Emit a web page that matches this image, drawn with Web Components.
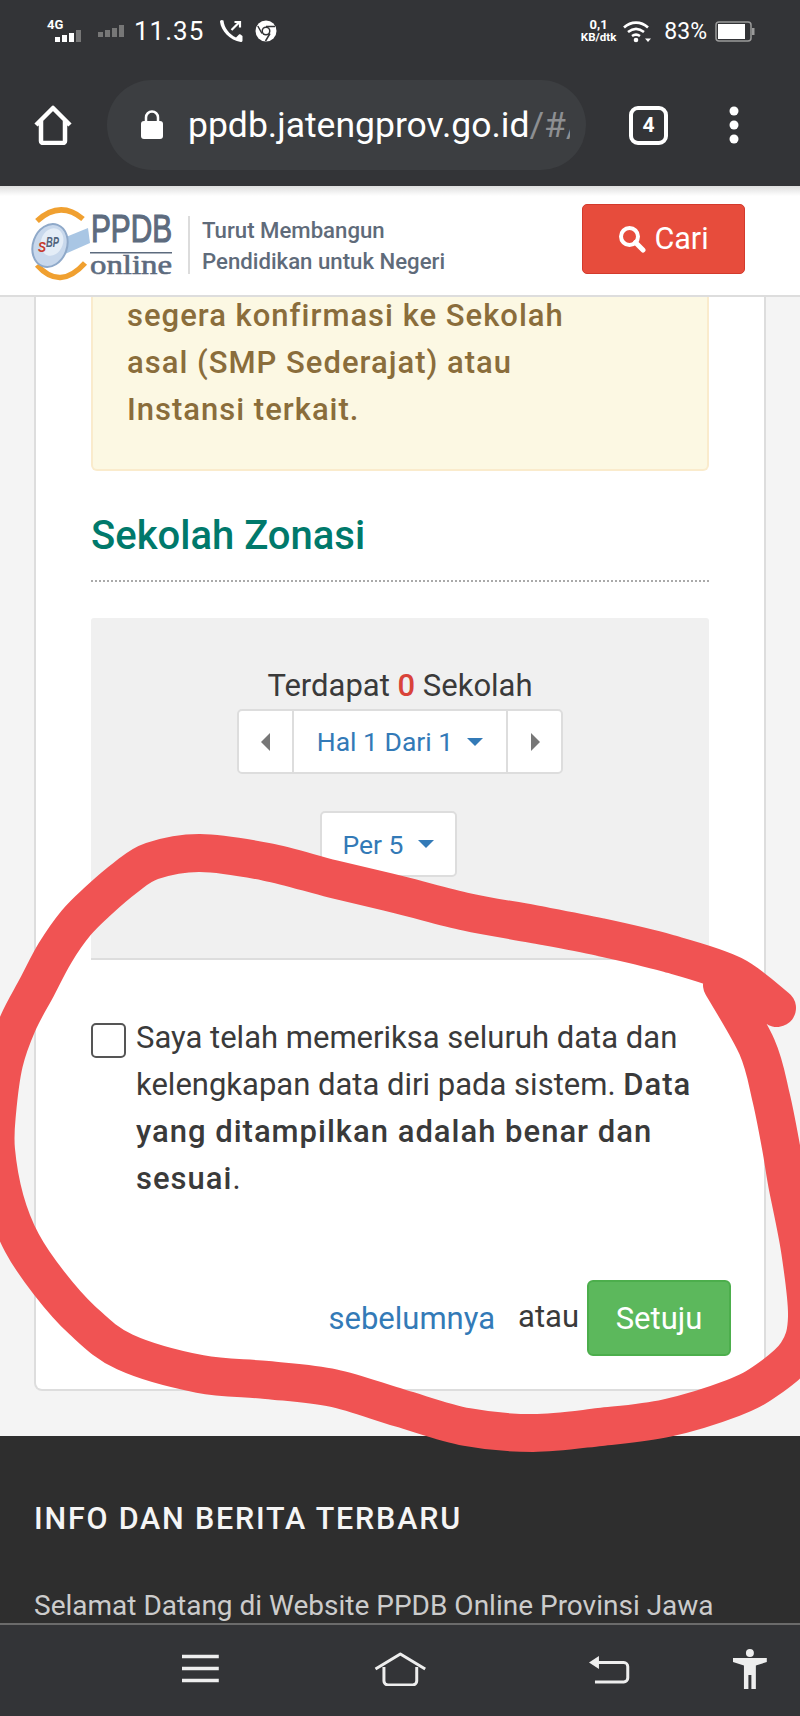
<!DOCTYPE html>
<html lang="id">
<head>
<meta charset="utf-8">
<title>PPDB Online</title>
<style>
  html, body { margin: 0; height: 1716px; overflow: hidden; }
  body {
    position: relative;
    display: flex;
    flex-direction: column;
    font-family: Roboto, "Liberation Sans", sans-serif;
    background: #f4f4f4;
  }
</style>
</head>
<body>
<phone-status></phone-status>
<browser-bar url="ppdb.jatengprov.go.id" rest="/#/" tabs="4"></browser-bar>
<site-header></site-header>
<page-main>
  <form-card>
    <alert-box>segera konfirmasi ke Sekolah<br>asal (SMP Sederajat) atau<br>Instansi terkait.</alert-box>
    <school-panel title-text="Sekolah Zonasi" total="0"></school-panel>
    <agree-form></agree-form>
  </form-card>
  <site-footer></site-footer>
</page-main>
<nav-keys></nav-keys>
<red-scribble></red-scribble>

<script>
class PhoneStatus extends HTMLElement {
  constructor() {
    super();
    this.attachShadow({ mode: "open" });
    this.shadowRoot.innerHTML = /*html*/ `
      <style>
        :host {
          display: flex;
          align-items: center;
          flex: none;
          height: 62px;
          padding: 0 45px 0 47px;
          background: #333437;
          color: #fff;
          font-family: Roboto, sans-serif;
        }
        .net { position: relative; width: 35px; height: 24px; }
        .net b { position: absolute; left: 0; top: -2px; font-size: 13px; font-weight: 700; line-height: 16px; }
        .net svg { position: absolute; left: 8px; top: 11px; }
        .sim2 { margin-left: 16px; }
        .time { margin-left: 8px; font-size: 26px; letter-spacing: 1px; }
        .call { margin-left: 15px; }
        .chrome { margin-left: 12px; }
        .space { flex: 1; }
        .speed { display: flex; flex-direction: column; align-items: center; font-size: 11.500px; font-weight: 700; line-height: 12px; }
        .speed span:first-child { font-size: 13px; }
        .wifi { margin-left: 7px; }
        .pct { margin-left: 13px; font-size: 23px; }
        .bat { margin-left: 8px; }
      </style>
      <div class="net"><b>4G</b>
        <svg width="28" height="12" viewBox="0 0 28 12"><g fill="#fff"><rect x="0" y="7" width="5" height="5"/><rect x="7" y="5" width="5" height="7"/><rect x="14" y="3" width="5" height="9"/></g><rect x="21" y="0" width="5" height="12" fill="#777"/></svg>
      </div>
      <svg class="sim2" width="28" height="14" viewBox="0 0 28 14"><g fill="#777"><rect x="0" y="8" width="5" height="5"/><rect x="7" y="6" width="5" height="7"/><rect x="14" y="4" width="5" height="9"/><rect x="21" y="1" width="5" height="12"/></g></svg>
      <span class="time">11.35</span>
      <svg class="call" width="24" height="24" viewBox="0 0 24 24"><path fill="#fff" d="M4.500 1.500c.5 7 6 14 12.500 17l3-3c.5-.4 1-.4 1.500-.1l2 1.500v4.500c0 1-.8 1.600-1.700 1.500C11 21.500 2 12 1 2.800 1 1.800 1.700 1 2.700 1z"/><path stroke="#fff" stroke-width="2.200" fill="none" d="M12.500 11 20 3.500M15.500 3H21v5.500"/></svg>
      <svg class="chrome" width="22" height="22" viewBox="0 0 22 22"><circle cx="11" cy="11" r="10.500" fill="#fff"/><circle cx="11" cy="11" r="4.500" fill="#333437"/><circle cx="11" cy="11" r="3" fill="#fff"/><path d="M11 6.500h9M7 13.500 2.800 6M15 13.500 10.500 21" stroke="#333437" stroke-width="1.500"/></svg>
      <div class="space"></div>
      <div class="speed"><span>0,1</span><span>KB/dtk</span></div>
      <svg class="wifi" width="28" height="23" viewBox="0 0 28 23"><g fill="none" stroke="#fff" stroke-width="2.600"><path d="M1 7.500C8 1 18 1 25 7.500"/><path d="M5 12c5-4 11-4 16 0"/><path d="M9 16c3-2 5-2 8 0"/></g><circle cx="13" cy="20" r="2.300" fill="#fff"/><path d="M22 18.500h6l-3 3.500z" fill="#fff"/></svg>
      <span class="pct">83%</span>
      <svg class="bat" width="40" height="21" viewBox="0 0 40 21"><rect x="1" y="1" width="35" height="19" rx="3" fill="none" stroke="#9a9a9a" stroke-width="1.500"/><rect x="3" y="3" width="27" height="15" fill="#fff"/><rect x="37" y="7" width="2.500" height="7" fill="#9a9a9a"/></svg>
    `;
  }
}

class BrowserBar extends HTMLElement {
  constructor() {
    super();
    this.attachShadow({ mode: "open" });
    this.shadowRoot.innerHTML = /*html*/ `
      <style>
        :host {
          display: flex;
          align-items: center;
          flex: none;
          height: 124px;
          box-sizing: border-box;
          padding: 2px 0 0 33px;
          background: #333437;
          font-family: Roboto, sans-serif;
        }
        svg { flex: none; }
        .pill {
          display: flex;
          align-items: center;
          flex: none;
          width: 479px;
          height: 90px;
          box-sizing: border-box;
          margin-left: 34px;
          padding: 0 16px 0 33px;
          border-radius: 45px;
          background: #3c3e41;
        }
        .url {
          min-width: 0;
          margin-left: 24px;
          overflow: hidden;
          white-space: nowrap;
          font-size: 35.500px;
          color: #fff;
        }
        .url span { color: #8d8f92; }
        .tabs {
          display: flex;
          align-items: center;
          justify-content: center;
          flex: none;
          width: 39px;
          height: 39px;
          box-sizing: border-box;
          margin-left: 43px;
          border: 4px solid #fff;
          border-radius: 9px;
          color: #fff;
          font-size: 21px;
          font-weight: 700;
        }
        .more { margin-left: 60px; }
      </style>
      <svg width="40" height="40" viewBox="0 0 40 40"><path d="M3 20 20 3l17 17M8 16v20a2 2 0 0 0 2 2h20a2 2 0 0 0 2-2V16" fill="none" stroke="#fff" stroke-width="4.500" stroke-linejoin="round"/></svg>
      <div class="pill">
        <svg width="24" height="30" viewBox="0 0 24 30"><rect x="1" y="11" width="22" height="18" rx="3" fill="#fff"/><path d="M6 12V7.500a6 6 0 0 1 12 0V12" fill="none" stroke="#fff" stroke-width="2.500"/></svg>
        <div class="url"></div>
      </div>
      <div class="tabs"></div>
      <svg class="more" width="12" height="40" viewBox="0 0 12 40"><circle cx="6" cy="6" r="4.500" fill="#fff"/><circle cx="6" cy="20" r="4.500" fill="#fff"/><circle cx="6" cy="34" r="4.500" fill="#fff"/></svg>
    `;
  }

  connectedCallback() {
    const url = this.shadowRoot.querySelector(".url");
    url.textContent = this.getAttribute("url");
    const rest = document.createElement("span");
    rest.textContent = this.getAttribute("rest");
    url.appendChild(rest);
    this.shadowRoot.querySelector(".tabs").textContent = this.getAttribute("tabs");
  }
}

class SiteHeader extends HTMLElement {
  constructor() {
    super();
    this.attachShadow({ mode: "open" });
    this.shadowRoot.innerHTML = /*html*/ `
      <style>
        :host {
          display: flex;
          align-items: center;
          flex: none;
          height: 111px;
          box-sizing: border-box;
          padding: 8px 55px 0 33px;
          background: linear-gradient(#dedede, #fff 10px);
          border-bottom: 2px solid #ddd;
          font-family: Roboto, sans-serif;
        }
        .logo { overflow: visible; flex: none; }
        .divider { width: 2px; height: 58px; margin: 0 12px 0 3px; background: #dcdcdc; }
        .tag {
          flex: 1;
          padding-top: 2px;
          font-size: 22.200px;
          font-weight: 500;
          line-height: 31px;
          color: #5f6b7a;
        }
        .cari {
          display: flex;
          align-items: center;
          justify-content: center;
          gap: 8px;
          width: 163px;
          height: 70px;
          box-sizing: border-box;
          margin-top: -12px;
          border: 1px solid #d33a2c;
          border-radius: 5px;
          background: #e74c3c;
          color: #fff;
          font-size: 30.500px;
        }
      </style>
      <svg class="logo" width="152" height="72" viewBox="0 0 152 72">
        <path d="M4 12Q27-9 50 10" fill="none" stroke="#f0a030" stroke-width="5.500"/>
        <path d="M4 56Q27 82 52 54" fill="none" stroke="#f0a030" stroke-width="5.500"/>
        <path d="M28 30 55 19 57 34 32 45z" fill="#a9c6e4"/>
        <ellipse cx="17" cy="36.500" rx="17" ry="22" transform="rotate(20 17 36.500)" fill="#c8d8ec" stroke="#8fa9c9" stroke-width="2"/>
        <ellipse cx="19" cy="33" rx="11" ry="14" transform="rotate(20 19 33)" fill="#e4edf7"/>
        <text x="5" y="43" font-family="Liberation Sans, sans-serif" font-size="15" font-style="italic" font-weight="700" fill="#c8392b" textLength="8" lengthAdjust="spacingAndGlyphs">S</text>
        <text x="13" y="38" font-family="Liberation Sans, sans-serif" font-size="14" font-style="italic" font-weight="700" fill="#51647d" textLength="13" lengthAdjust="spacingAndGlyphs">BP</text>
        <text x="58" y="33" font-family="Liberation Sans, sans-serif" font-size="38" fill="#5d6b7e" stroke="#5d6b7e" stroke-width="1.200" textLength="81" lengthAdjust="spacingAndGlyphs">PPDB</text>
        <rect x="57" y="43" width="82" height="1.500" fill="#5d6b7e"/>
        <text x="57" y="64.500" font-family="Liberation Serif, serif" font-size="27" fill="#5d6b7e" stroke="#5d6b7e" stroke-width=".6" textLength="82" lengthAdjust="spacingAndGlyphs">online</text>
      </svg>
      <div class="divider"></div>
      <div class="tag">Turut Membangun<br>Pendidikan untuk Negeri</div>
      <div class="cari">
        <svg width="28" height="28" viewBox="0 0 28 28"><circle cx="11.500" cy="11.500" r="8.500" fill="none" stroke="#fff" stroke-width="4"/><path d="M17.500 17.500 25 25" stroke="#fff" stroke-width="5" stroke-linecap="round"/></svg>
        <span>Cari</span>
      </div>
    `;
  }
}

class PageMain extends HTMLElement {
  constructor() {
    super();
    this.attachShadow({ mode: "open" });
    this.shadowRoot.innerHTML = /*html*/ `
      <style>
        :host {
          display: block;
          flex: 1;
          min-height: 0;
          overflow: hidden;
          background: #f4f4f4;
        }
      </style>
      <slot></slot>
    `;
  }
}

class FormCard extends HTMLElement {
  constructor() {
    super();
    this.attachShadow({ mode: "open" });
    this.shadowRoot.innerHTML = /*html*/ `
      <style>
        :host {
          display: flow-root;
          height: 1094px;
          box-sizing: border-box;
          margin: 0 34px 45px;
          padding: 0 55px;
          background: #fff;
          border: 2px solid #ddd;
          border-top: 0;
          border-radius: 0 0 8px 8px;
          color: #3a3a3a;
          font-family: Roboto, sans-serif;
        }
      </style>
      <slot></slot>
    `;
  }
}

class AlertBox extends HTMLElement {
  constructor() {
    super();
    this.attachShadow({ mode: "open" });
    this.shadowRoot.innerHTML = /*html*/ `
      <style>
        :host {
          display: block;
          height: 179px;
          box-sizing: border-box;
          margin-top: -5px;
          padding: 0 34px;
          background: #fcf8e3;
          border: 2px solid #faebcc;
          border-top: 0;
          border-radius: 0 0 6px 6px;
          color: #8a6d3b;
          font-size: 31px;
          font-weight: 500;
          line-height: 47px;
          letter-spacing: 1px;
        }
      </style>
      <slot></slot>
    `;
  }
}

class SchoolPanel extends HTMLElement {
  constructor() {
    super();
    this.attachShadow({ mode: "open" });
    this.shadowRoot.innerHTML = /*html*/ `
      <style>
        :host { display: block; font-family: Roboto, sans-serif; }
        h2 {
          margin: 0;
          padding: 41px 0 20px;
          border-bottom: 2px dotted #aaa;
          color: #00796b;
          font-size: 40px;
          font-weight: 500;
          line-height: 48px;
        }
        .panel {
          display: flex;
          flex-direction: column;
          align-items: center;
          height: 342px;
          box-sizing: border-box;
          margin-top: 36px;
          padding-top: 48px;
          background: #f0f0f0;
          border-bottom: 2px solid #ddd;
          border-radius: 3px 3px 0 0;
        }
        .count { font-size: 31px; line-height: 40px; color: #3a3a3a; }
        .count b { font-weight: 500; color: #d9433a; }
        .pager {
          display: flex;
          height: 65px;
          box-sizing: border-box;
          margin-top: 3px;
          background: #fff;
          border: 2px solid #ddd;
          border-radius: 5px;
        }
        .pager > div { display: flex; align-items: center; justify-content: center; }
        .nav { width: 53px; }
        .mid {
          width: 212px;
          gap: 14px;
          border: solid #ddd;
          border-width: 0 2px;
          color: #337ab7;
          font-size: 26.500px;
        }
        .per {
          display: flex;
          align-items: center;
          justify-content: center;
          gap: 14px;
          width: 137px;
          height: 66px;
          box-sizing: border-box;
          margin: 37px 24px 0 0;
          background: #fff;
          border: 2px solid #ddd;
          border-radius: 5px;
          color: #337ab7;
          font-size: 26.500px;
        }
        .down { width: 0; height: 0; border: 8px solid transparent; border-top-color: #337ab7; border-bottom: 0; }
      </style>
      <h2></h2>
      <div class="panel">
        <div class="count">Terdapat <b></b> Sekolah</div>
        <div class="pager">
          <div class="nav"><svg width="10" height="18" viewBox="0 0 10 18"><path d="M9 0v18L0 9z" fill="#777"/></svg></div>
          <div class="mid"><span>Hal 1 Dari 1</span><i class="down"></i></div>
          <div class="nav"><svg width="10" height="18" viewBox="0 0 10 18"><path d="M1 0v18l9-9z" fill="#777"/></svg></div>
        </div>
        <div class="per"><span>Per 5</span><i class="down"></i></div>
      </div>
    `;
  }

  connectedCallback() {
    this.shadowRoot.querySelector("h2").textContent = this.getAttribute("title-text");
    this.shadowRoot.querySelector(".count b").textContent = this.getAttribute("total");
  }
}

class AgreeForm extends HTMLElement {
  constructor() {
    super();
    this.attachShadow({ mode: "open" });
    this.shadowRoot.innerHTML = /*html*/ `
      <style>
        :host { display: block; font-family: Roboto, sans-serif; color: #3a3a3a; }
        .check {
          display: grid;
          grid-template-columns: 35px 1fr;
          column-gap: 10px;
          padding-top: 54px;
          font-size: 31px;
          line-height: 47px;
        }
        .box {
          width: 35px;
          height: 35px;
          box-sizing: border-box;
          margin-top: 9px;
          border: 2px solid #555;
          border-radius: 5px;
          background: #fff;
        }
        b { font-weight: 500; letter-spacing: 1px; }
        .actions {
          display: flex;
          align-items: center;
          justify-content: flex-end;
          height: 76px;
          margin: 78px -22px 0 0;
          font-size: 31px;
        }
        a { color: #337ab7; text-decoration: none; }
        .or { margin: -4px 8px 0 23px; }
        button {
          width: 144px;
          height: 76px;
          border: 2px solid #4cae4c;
          border-radius: 6px;
          background: #5cb85c;
          color: #fff;
          font: 31px Roboto, sans-serif;
        }
      </style>
      <div class="check">
        <div class="box"></div>
        <div>Saya telah memeriksa seluruh data dan kelengkapan data diri pada sistem. <b>Data yang ditampilkan adalah benar dan sesuai</b>.</div>
      </div>
      <div class="actions">
        <a>sebelumnya</a>
        <span class="or">atau</span>
        <button type="button">Setuju</button>
      </div>
    `;
  }
}

class SiteFooter extends HTMLElement {
  constructor() {
    super();
    this.attachShadow({ mode: "open" });
    this.shadowRoot.innerHTML = /*html*/ `
      <style>
        :host {
          display: block;
          height: 190px;
          box-sizing: border-box;
          padding: 61px 34px 0;
          background: #2e2e2e;
          font-family: Roboto, sans-serif;
        }
        h3 {
          margin: 0;
          color: #f5f5f5;
          font-size: 30.500px;
          font-weight: 500;
          letter-spacing: 1.800px;
          line-height: 44px;
        }
        p {
          margin: 45px 0 0;
          color: #ccc;
          font-size: 28px;
          line-height: 40px;
        }
      </style>
      <h3>INFO DAN BERITA TERBARU</h3>
      <p>Selamat Datang di Website PPDB Online Provinsi Jawa</p>
    `;
  }
}

class NavKeys extends HTMLElement {
  constructor() {
    super();
    this.attachShadow({ mode: "open" });
    this.shadowRoot.innerHTML = /*html*/ `
      <style>
        :host {
          display: flex;
          align-items: center;
          flex: none;
          height: 93px;
          box-sizing: border-box;
          padding: 0 33px 4px 182px;
          background: #333437;
          border-top: 2px solid #6b6b6b;
        }
        .home { margin-left: 155px; }
        .back { margin-left: 163px; }
        .man { margin-left: 103px; }
      </style>
      <svg width="37" height="29" viewBox="0 0 37 29"><path d="M0 2.500h37M0 14.500h37M0 26.500h37" stroke="#eee" stroke-width="3.500"/></svg>
      <svg class="home" width="53" height="34" viewBox="0 0 53 34"><path d="M1.500 17 26.500 2l25 15M10 15v14a4 4 0 0 0 4 4h25a4 4 0 0 0 4-4V15" fill="none" stroke="#eee" stroke-width="3" stroke-linejoin="round"/></svg>
      <svg class="back" width="41" height="31" viewBox="0 0 41 31"><path d="M8 9.500h27a4 4 0 0 1 4 4V25a4 4 0 0 1-4 4H6" fill="none" stroke="#eee" stroke-width="3"/><path d="M0 9.500 10 3v13z" fill="#eee"/></svg>
      <svg class="man" width="34" height="40" viewBox="0 0 34 40"><circle cx="17" cy="4" r="4" fill="#eee"/><path d="M0 9h34v4l-11 3.500V40h-4.500V26h-3v14H11V16.500L0 13z" fill="#eee"/></svg>
    `;
  }
}

// hand-drawn marker ring over the page, points are the middle of the stroke
const SCRIBBLE_POINTS = [
  [777, 1008], [733, 975], [667, 953], [600, 937], [533, 924], [467, 912], [400, 895],
  [333, 879], [267, 862], [200, 853], [152, 861], [125, 878], [98, 901], [76, 923],
  [55, 953], [37, 987], [18, 1023], [4, 1063], [-3, 1113], [-4, 1150], [5, 1200],
  [22, 1243], [49, 1283], [82, 1320], [125, 1352], [200, 1374], [267, 1380], [333, 1388],
  [400, 1408], [467, 1427], [533, 1433], [600, 1427], [667, 1418], [733, 1398], [767, 1380],
  [797, 1353], [807, 1317], [800, 1250], [787, 1183], [781, 1147], [771, 1097], [757, 1047],
  [722, 985]
];

function smoothPath(pts) {
  let d = "M" + pts[0].join(" ");
  for (let i = 0; i < pts.length - 1; i++) {
    const p0 = pts[i - 1] || pts[i];
    const p1 = pts[i];
    const p2 = pts[i + 1];
    const p3 = pts[i + 2] || p2;
    const c1 = [p1[0] + (p2[0] - p0[0]) / 6, p1[1] + (p2[1] - p0[1]) / 6];
    const c2 = [p2[0] - (p3[0] - p1[0]) / 6, p2[1] - (p3[1] - p1[1]) / 6];
    d += "C" + c1.join(" ") + " " + c2.join(" ") + " " + p2.join(" ");
  }
  return d;
}

class RedScribble extends HTMLElement {
  constructor() {
    super();
    this.attachShadow({ mode: "open" });
    this.shadowRoot.innerHTML = /*html*/ `
      <style>
        :host { position: absolute; left: 0; top: 0; width: 800px; height: 1716px; pointer-events: none; }
        svg { display: block; }
      </style>
      <svg width="800" height="1716" viewBox="0 0 800 1716">
        <path d="${smoothPath(SCRIBBLE_POINTS)}" fill="none" stroke="#f05353" stroke-width="38" stroke-linecap="round" stroke-linejoin="round"/>
      </svg>
    `;
  }
}

customElements.define("phone-status", PhoneStatus);
customElements.define("browser-bar", BrowserBar);
customElements.define("site-header", SiteHeader);
customElements.define("page-main", PageMain);
customElements.define("form-card", FormCard);
customElements.define("alert-box", AlertBox);
customElements.define("school-panel", SchoolPanel);
customElements.define("agree-form", AgreeForm);
customElements.define("site-footer", SiteFooter);
customElements.define("nav-keys", NavKeys);
customElements.define("red-scribble", RedScribble);
</script>
</body>
</html>
